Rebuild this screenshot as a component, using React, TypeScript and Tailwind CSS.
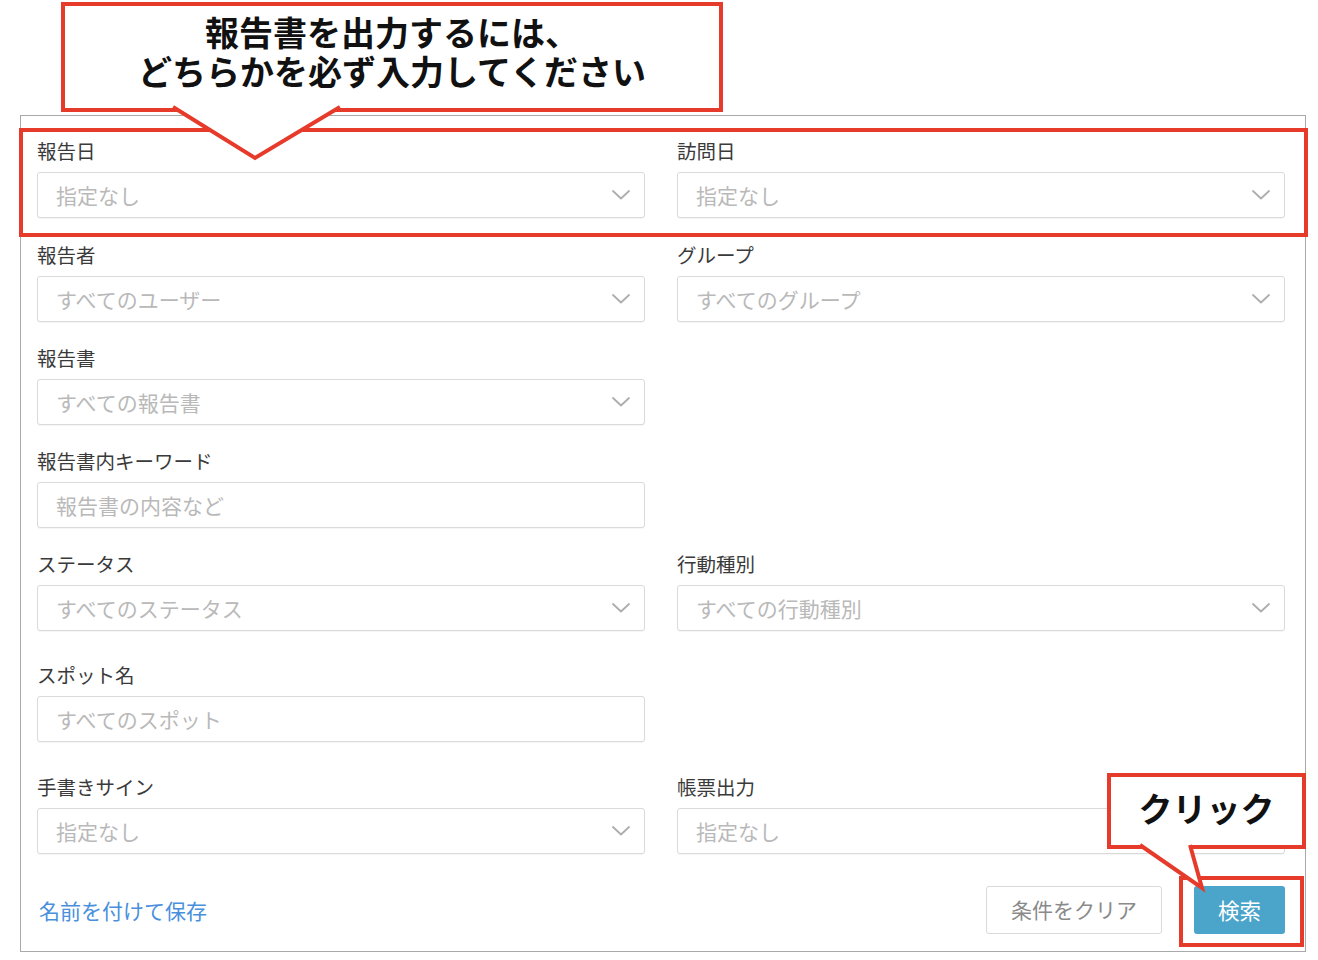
import React from "react";

const FONT = { fontFamily: '"Noto Sans CJK JP", "Noto Sans", sans-serif' };

function Chevron() {
  return (
    <svg width="18" height="10" viewBox="0 0 18 10" fill="none">
      <path d="M1 1 L9 8.5 L17 1" stroke="#adadad" strokeWidth="1.8" strokeLinecap="round" strokeLinejoin="round" />
    </svg>
  );
}

function Field({ label, placeholder, select = true }: { label: string; placeholder: string; select?: boolean }) {
  return (
    <div className="flex flex-col">
      <div className="h-[24px] text-[19.5px] leading-[24px] text-[#3a3a3a]">{label}</div>
      <div className="mt-[9px] flex h-[46px] items-center justify-between rounded-[3px] border border-[#dadada] bg-white pl-[18px] pr-[14px] shadow-[0_1px_1px_rgba(0,0,0,0.04)]">
        <span className="text-[21px] leading-[28px] text-[#b9b9b9]">{placeholder}</span>
        {select && <Chevron />}
      </div>
    </div>
  );
}

export default function App() {
  return (
    <div className="relative h-[960px] w-[1318px] overflow-hidden bg-white" style={FONT}>
      <div className="pl-[20px] pt-[115px]">
        <div className="flex h-[837px] w-[1286px] flex-col border border-[#a9a9a9] pl-[16px] pr-[20px] pt-[23px]">
          <div className="grid grid-cols-2 gap-x-[32px]">
            <Field label="報告日" placeholder="指定なし" />
            <Field label="訪問日" placeholder="指定なし" />
          </div>
          <div className="mt-[25px] grid grid-cols-2 gap-x-[32px]">
            <Field label="報告者" placeholder="すべてのユーザー" />
            <Field label="グループ" placeholder="すべてのグループ" />
          </div>
          <div className="mt-[24px] grid grid-cols-2 gap-x-[32px]">
            <Field label="報告書" placeholder="すべての報告書" />
            <div />
          </div>
          <div className="mt-[24px] grid grid-cols-2 gap-x-[32px]">
            <Field label="報告書内キーワード" placeholder="報告書の内容など" select={false} />
            <div />
          </div>
          <div className="mt-[24px] grid grid-cols-2 gap-x-[32px]">
            <Field label="ステータス" placeholder="すべてのステータス" />
            <Field label="行動種別" placeholder="すべての行動種別" />
          </div>
          <div className="mt-[32px] grid grid-cols-2 gap-x-[32px]">
            <Field label="スポット名" placeholder="すべてのスポット" select={false} />
            <div />
          </div>
          <div className="mt-[33px] grid grid-cols-2 gap-x-[32px]">
            <Field label="手書きサイン" placeholder="指定なし" />
            <Field label="帳票出力" placeholder="指定なし" />
          </div>
          <div className="mt-[32px] flex items-center justify-between">
            <a className="pl-[2px] text-[21px] leading-[28px] text-[#4a8fdc]">名前を付けて保存</a>
            <div className="flex items-center gap-[32px]">
              <button className="flex h-[48px] w-[176px] items-center justify-center rounded-[3px] border border-[#d9d9d9] bg-white text-[21px] text-[#8a8a8a]">
                条件をクリア
              </button>
              <button className="flex h-[48px] w-[91px] items-center justify-center rounded-[3px] bg-[#4ba4ca] text-[21.5px] text-white">
                検索
              </button>
            </div>
          </div>
        </div>
      </div>

      {/* highlight boxes */}
      <div className="absolute left-[19px] top-[128px] h-[109px] w-[1289px] border-4 border-[#e63a2b]" />
      <div className="absolute left-[1179px] top-[876px] h-[71px] w-[125px] border-4 border-[#e63a2b]" />

      {/* top callout */}
      <div className="absolute left-[61px] top-[2px] flex h-[110px] w-[662px] flex-col items-center justify-center border-4 border-[#e63a2b] bg-white pb-[12px] text-[34px] font-bold leading-[39px] text-[#111]">
        <div>報告書を出力するには、</div>
        <div>どちらかを必ず入力してください</div>
      </div>
      <svg className="absolute left-0 top-0" width="400" height="170" viewBox="0 0 400 170">
        <polygon points="173,106 255,158 340,106" fill="white" />
        <polyline points="173,107 255,158 340,107" fill="none" stroke="#e63a2b" strokeWidth="4" strokeLinejoin="miter" />
      </svg>

      {/* click callout */}
      <div className="absolute left-[1107px] top-[773px] flex h-[76px] w-[199px] items-center justify-center border-4 border-[#e63a2b] bg-white pb-[6px] text-[34px] font-bold leading-[40px] text-[#111]">
        クリック
      </div>
      <svg className="absolute left-[1100px] top-[830px]" width="120" height="70" viewBox="0 0 120 70">
        <polygon points="40,14 102,58 91,14" fill="white" />
        <polyline points="40,15 102,58 90,15" fill="none" stroke="#e63a2b" strokeWidth="4" strokeLinejoin="miter" />
      </svg>
    </div>
  );
}
